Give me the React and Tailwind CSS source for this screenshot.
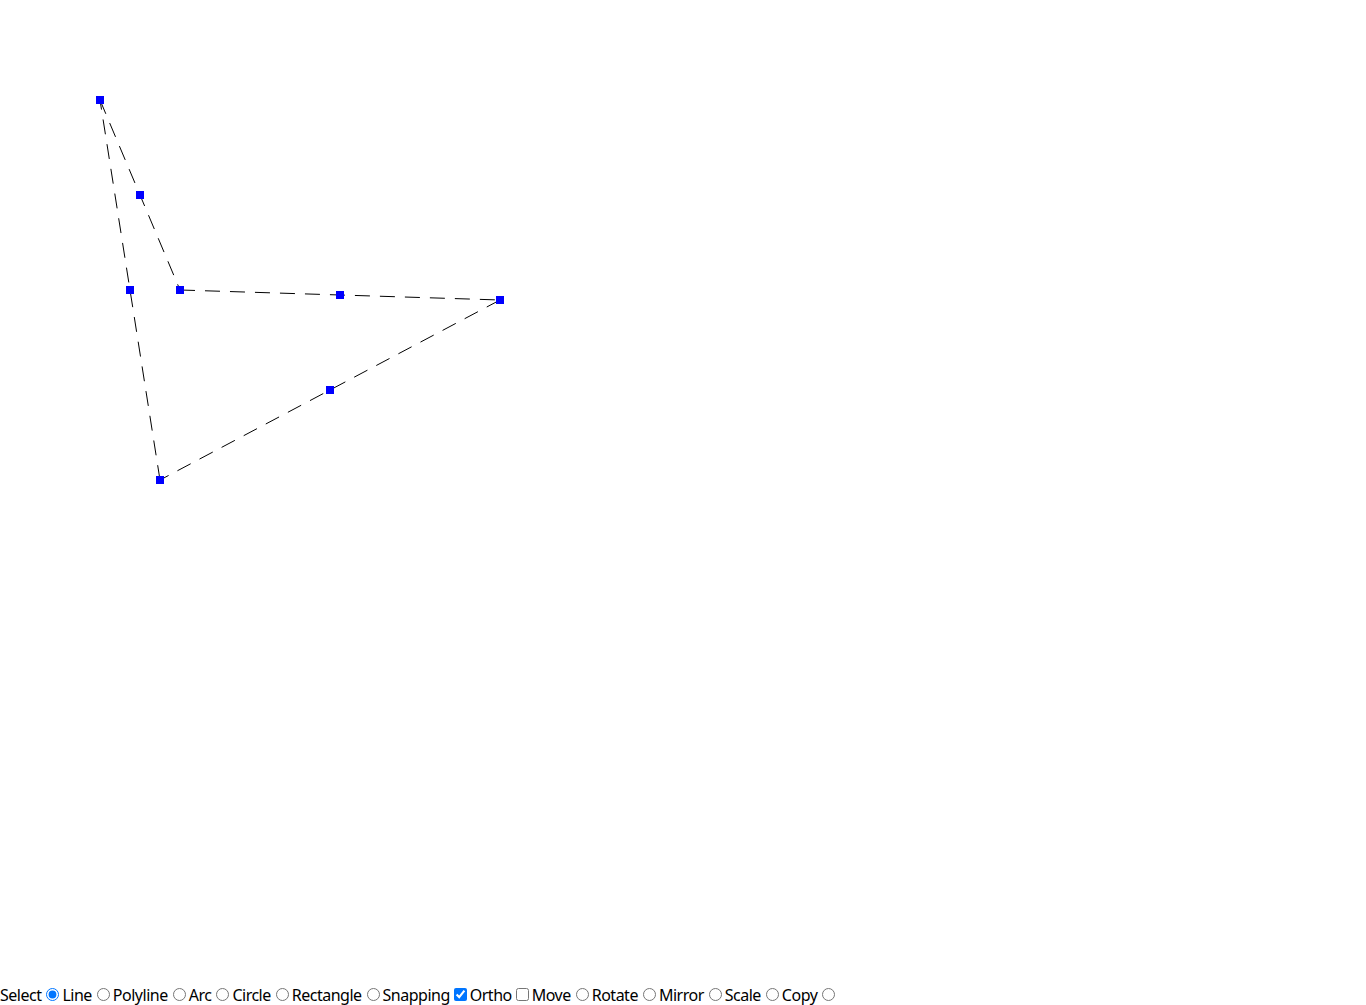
import React, { useState } from 'react';

const points = [
  [100, 100],
  [180, 290],
  [500, 300],
  [160, 480],
];

const modes = ['Select', 'Line', 'Polyline', 'Arc', 'Circle', 'Rectangle'];
const edits = ['Move', 'Rotate', 'Mirror', 'Scale', 'Copy'];

export default function App() {
  const [mode, setMode] = useState('Select');
  const [snapping, setSnapping] = useState(true);
  const [ortho, setOrtho] = useState(false);

  // edges of the closed polyline, each with a midpoint grip
  const edges = points.map((p, i) => [p, points[(i + 1) % points.length]]);
  const grips = [
    ...points,
    ...edges.map(([a, b]) => [(a[0] + b[0]) / 2, (a[1] + b[1]) / 2]),
  ];

  return (
    <div className="flex flex-col bg-white" style={{ fontFamily: '"Noto Sans", sans-serif' }}>
      <svg width="1366" height="985" className="block">
        {edges.map(([a, b], i) => (
          <line
            key={i}
            x1={a[0]}
            y1={a[1]}
            x2={b[0]}
            y2={b[1]}
            stroke="#000"
            strokeWidth="1"
            strokeDasharray="15 10"
          />
        ))}
        {grips.map(([x, y], i) => (
          <rect key={i} x={x - 4} y={y - 4} width="8" height="8" fill="#0000ff" />
        ))}
      </svg>

      <div className="text-[16px] leading-[20px] tracking-[-0.5px] text-black whitespace-nowrap">
        {modes.map((m) => (
          <label key={m}>
            {m}
            <input
              type="radio"
              name="mode"
              checked={mode === m}
              onChange={() => setMode(m)}
              className="ml-[5px] mr-[3px] mt-[3px]"
            />
          </label>
        ))}
        <label>
          Snapping
          <input
            type="checkbox"
            checked={snapping}
            onChange={() => setSnapping(!snapping)}
            className="ml-[4px] mr-[3px] mt-[3px]"
          />
        </label>
        <label>
          Ortho
          <input
            type="checkbox"
            checked={ortho}
            onChange={() => setOrtho(!ortho)}
            className="ml-[4px] mr-[3px] mt-[3px]"
          />
        </label>
        {edits.map((m) => (
          <label key={m}>
            {m}
            <input
              type="radio"
              name="mode"
              checked={mode === m}
              onChange={() => setMode(m)}
              className="ml-[5px] mr-[3px] mt-[3px]"
            />
          </label>
        ))}
      </div>
    </div>
  );
}
